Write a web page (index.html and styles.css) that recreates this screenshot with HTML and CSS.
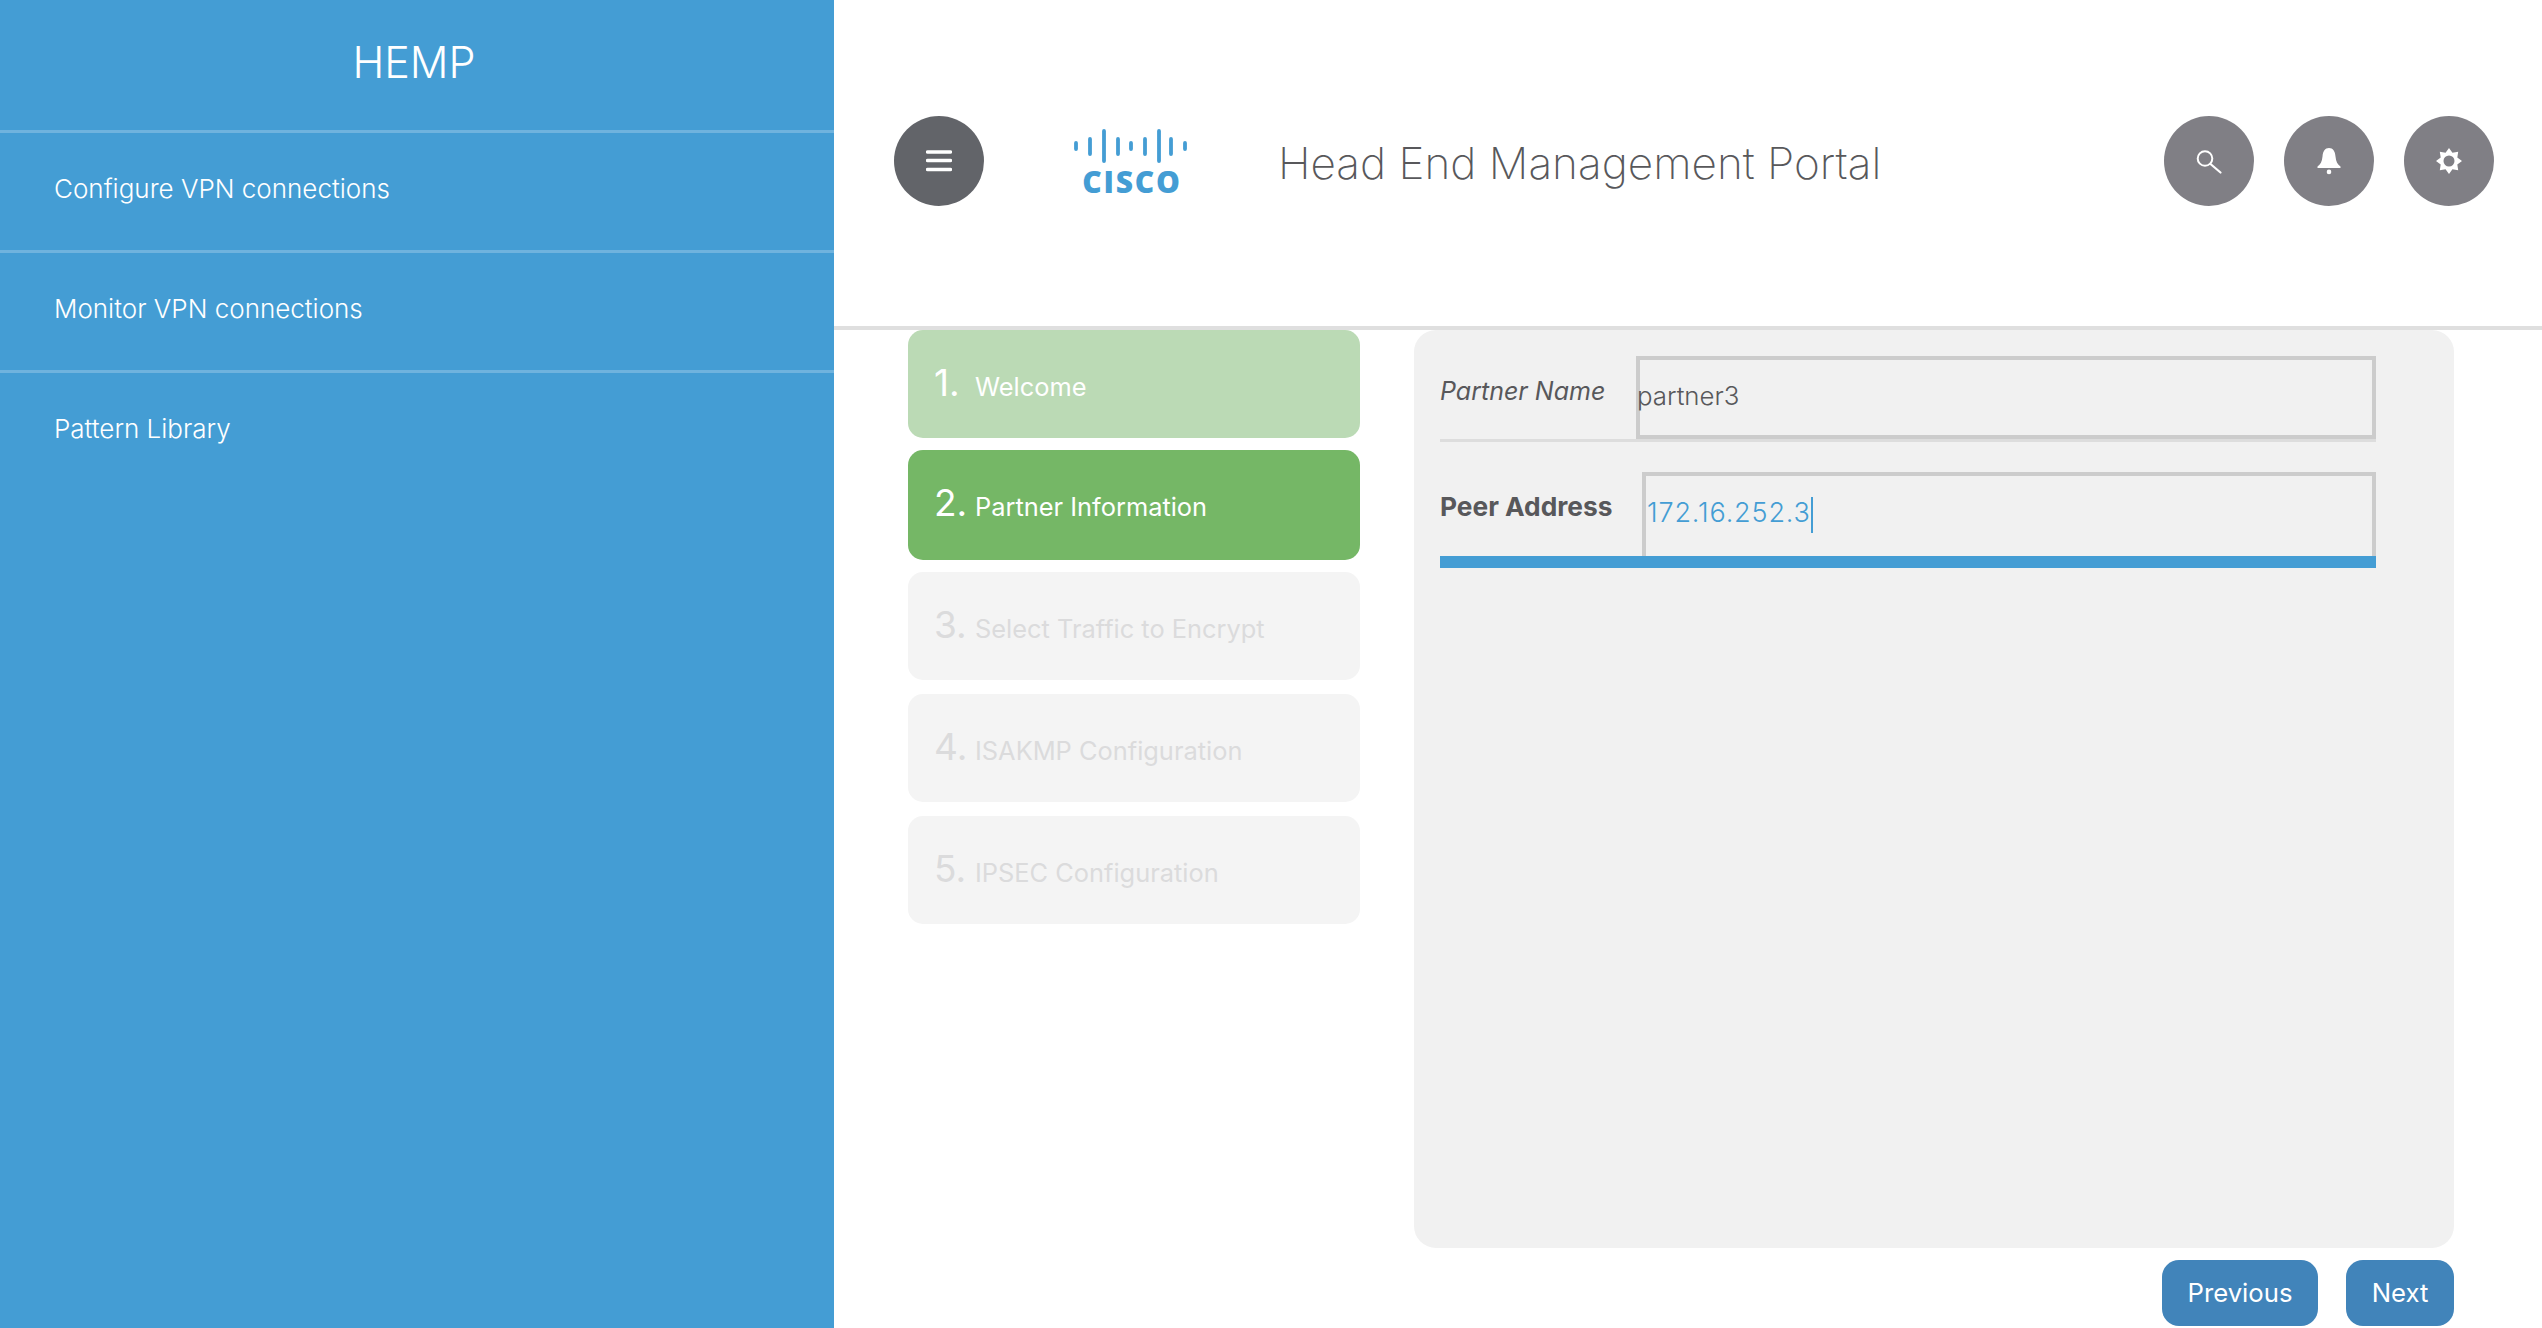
FILE: index.html
```html
<!DOCTYPE html>
<html lang="en">
<head>
  <meta charset="UTF-8" />
  <title>HEMP - Head End Management Portal</title>
  <link rel="stylesheet" href="styles.css">
</head>
<body>
  <aside class="sidebar">
    <h1 class="brand">HEMP</h1>
    <nav>
      <a class="nav-item">Configure VPN connections</a>
      <a class="nav-item">Monitor VPN connections</a>
      <a class="nav-item">Pattern Library</a>
    </nav>
  </aside>

  <main class="main">
    <header class="topbar">
      <button class="round-btn menu-btn">
        <svg width="26" height="22" viewBox="0 0 26 22"><path d="M1.500 2h23M1.500 10.500h23M1.500 19.500h23" stroke="#fff" stroke-width="3.400" stroke-linecap="round"/></svg>
      </button>
      <div class="logo">
        <svg width="113" height="34" viewBox="0 0 113 34">
          <path d="M2 14v6M16 10v15M30 2v30M44 10v15M57 14v6M71 10v15M85 2v30M97 10v15M111 14v6" stroke="#449dd4" stroke-width="3.800" stroke-linecap="round"/>
        </svg>
        <span class="logo-text">CISCO</span>
      </div>
      <div class="portal-title">Head End Management Portal</div>
      <div class="topbar-actions">
        <button class="round-btn">
          <svg width="26" height="26" viewBox="0 0 26 26"><circle cx="9" cy="10.500" r="7.300" fill="none" stroke="#fff" stroke-width="2"/><path d="M14.500 16l10 8.500" stroke="#fff" stroke-width="2.200" stroke-linecap="round"/></svg>
        </button>
        <button class="round-btn">
          <svg width="26" height="28" viewBox="0 0 26 28"><path d="M1.500 21v-1.500c3-2 4.500-5 5-10C7 4 9 1 13 1s6 3 6.500 8.500c.5 5 2 8 5 10V21z" fill="#fff"/><circle cx="13" cy="24.900" r="2.300" fill="#fff"/></svg>
        </button>
        <button class="round-btn">
          <svg width="28" height="28" viewBox="0 0 28 28"><path fill-rule="evenodd" fill="#fff" d="M14 1l3.440 4.690L23.200 4.800l-.89 5.760L27 14l-4.690 3.440.89 5.760-5.760-.89L14 27l-3.440-4.690-5.760.89.89-5.760L1 14l4.690-3.440L4.800 4.800l5.760.89zM14 8.500a5.500 5.500 0 1 0 0 11 5.500 5.500 0 0 0 0-11z"/></svg>
        </button>
      </div>
    </header>

    <section class="wizard">
      <ol class="steps">
        <li class="step step-done"><span class="step-num">1.</span>Welcome</li>
        <li class="step step-active"><span class="step-num">2.</span>Partner Information</li>
        <li class="step"><span class="step-num">3.</span>Select Traffic to Encrypt</li>
        <li class="step"><span class="step-num">4.</span>ISAKMP Configuration</li>
        <li class="step"><span class="step-num">5.</span>IPSEC Configuration</li>
      </ol>

      <div class="wizard-body">
        <div class="panel">
          <div class="field field-name">
            <label class="field-label">Partner Name</label>
            <div class="field-input">partner3</div>
          </div>
          <div class="field field-peer">
            <label class="field-label">Peer Address</label>
            <div class="field-input">172.16.252.3<span class="caret"></span></div>
          </div>
        </div>
        <div class="wizard-buttons">
          <button class="btn btn-prev">Previous</button>
          <button class="btn btn-next">Next</button>
        </div>
      </div>
    </section>
  </main>
</body>
</html>
```

FILE: styles.css
```css
* {
  box-sizing: border-box;
}

html, body {
  height: 100%;
}

body {
  margin: 0;
  display: flex;
  overflow: hidden;
  font-family: Inter, 'Liberation Sans', sans-serif;
  background-color: #fff;
  color: #58585b;
}

button {
  font-family: inherit;
  border: none;
  padding: 0;
}

/* sidebar */
.sidebar {
  width: 834px;
  flex: none;
  background-color: #449dd4;
  color: #fff;
}

.brand {
  height: 130px;
  margin: 0;
  padding: 35px 6px 0 0;
  font-size: 43px;
  line-height: 54px;
  font-weight: 300;
  text-align: center;
}

.nav-item {
  display: flex;
  align-items: center;
  height: 120px;
  padding: 0 54px 6px;
  font-size: 26px;
  font-weight: 300;
  border-top: 3px solid #6fb3de;
}

/* header */
.main {
  flex: 1;
  display: flex;
  flex-direction: column;
  min-width: 0;
}

.topbar {
  height: 330px;
  flex: none;
  display: flex;
  align-items: flex-start;
  padding: 116px 48px 0 60px;
  border-bottom: 4px solid #dfdfdf;
}

.round-btn {
  width: 90px;
  height: 90px;
  border-radius: 50%;
  background-color: #807f85;
  display: flex;
  align-items: center;
  justify-content: center;
}

.menu-btn {
  background-color: #626469;
}

.logo {
  width: 113px;
  margin: 13px 0 0 90px;
  text-align: center;
}

.logo svg {
  display: block;
}

.logo-text {
  display: block;
  margin-top: 3px;
  padding-left: 3px;
  font-family: 'Open Sans', sans-serif;
  font-size: 30px;
  line-height: 32px;
  font-weight: 800;
  letter-spacing: 1.800px;
  color: #449dd4;
}

.portal-title {
  margin: 20px 0 0 91px;
  font-size: 44.100px;
  line-height: 54px;
  font-weight: 200;
  color: #58585b;
}

.topbar-actions {
  margin-left: auto;
  display: flex;
  gap: 30px;
}

/* wizard */
.wizard {
  flex: 1;
  display: flex;
  padding-left: 74px;
  min-height: 0;
}

.steps {
  width: 452px;
  flex: none;
  margin: 0;
  padding: 0;
  list-style: none;
}

.step {
  height: 108px;
  margin-bottom: 14px;
  padding: 31px 20px 0 26px;
  display: flex;
  align-items: baseline;
  border-radius: 15px;
  background-color: #f4f4f4;
  color: #dbdbdc;
  font-size: 25.400px;
}

.step-done {
  margin-bottom: 12px;
  background-color: #bbdab5;
  color: #fff;
}

.step-active {
  height: 110px;
  margin-bottom: 12px;
  background-color: #75b766;
  color: #fff;
}

.step-num {
  flex: none;
  width: 41px;
  font-size: 37px;
  line-height: 44px;
  font-weight: 400;
}

.wizard-body {
  width: 1040px;
  margin-left: 54px;
  display: flex;
  flex-direction: column;
}

.panel {
  height: 918px;
  padding: 26px 78px 0 26px;
  border-radius: 22px;
  background-color: #f1f1f1;
}

.field {
  display: flex;
  align-items: stretch;
}

.field-name {
  height: 86px;
  border-bottom: 3px solid #dddddd;
}

.field-peer {
  height: 96px;
  margin-top: 30px;
  border-bottom: 12px solid #449dd4;
}

.field-label {
  flex: none;
  color: #58585b;
}

.field-name .field-label {
  width: 196px;
  padding-top: 20px;
  font-size: 25px;
  font-style: italic;
}

.field-peer .field-label {
  width: 202px;
  padding-top: 19px;
  font-size: 26.300px;
  font-weight: 700;
}

.field-input {
  flex: 1;
  font-weight: 300;
  border: 4px solid #cccccc;
}

.field-name .field-input {
  padding: 20px 0 0 0;
  font-size: 25.800px;
  text-indent: -3px;
}

.field-peer .field-input {
  padding: 20px 0 0 1px;
  font-size: 27px;
  letter-spacing: 0.850px;
  border-bottom: 0;
  color: #449dd4;
}

.caret {
  display: inline-block;
  width: 2px;
  height: 36px;
  vertical-align: middle;
  background-color: #449dd4;
}

.wizard-buttons {
  display: flex;
  justify-content: flex-end;
  gap: 28px;
  margin-top: 12px;
}

.btn {
  height: 66px;
  padding-bottom: 2px;
  border-radius: 17px;
  background-color: #4184ba;
  color: #fff;
  font-size: 25.700px;
}

.btn-prev {
  width: 156px;
}

.btn-next {
  width: 108px;
}
```
